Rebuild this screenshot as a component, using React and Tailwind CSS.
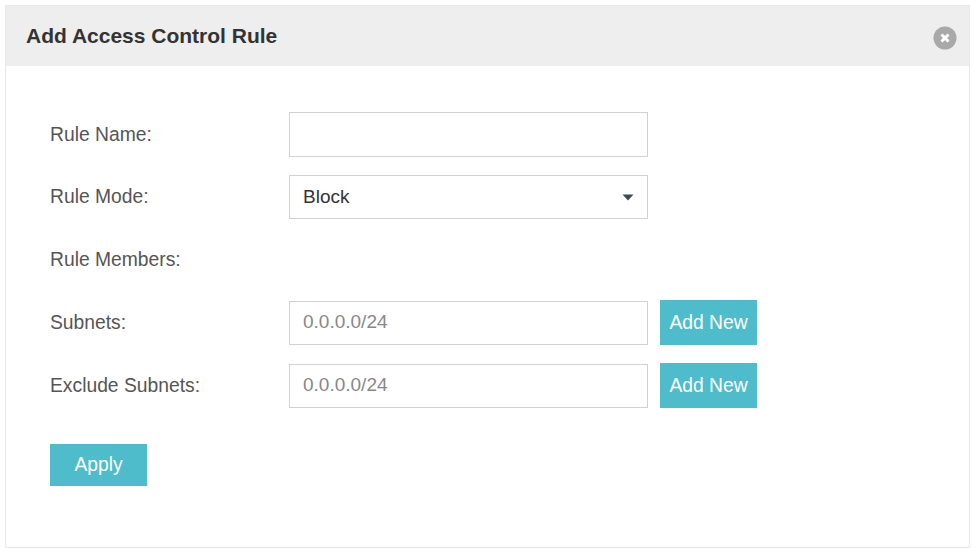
import React from 'react';

const Label = ({ children }) => (
    <label className="w-[239px] shrink-0 text-[19.3px] text-[#555] leading-[24px]">{children}</label>
);

const boxClass = "w-[359px] h-[44px] border border-[#d2d2d2] bg-white px-[13px] text-[19px] flex items-center";

const SubnetRow = ({ label, className }) => (
    <div className={"flex items-center h-[45px] " + className}>
        <Label>{label}</Label>
        <div className={boxClass + " text-[#888]"}>0.0.0.0/24</div>
        <button className="ml-[12px] w-[97px] h-[45px] bg-[#4fbccb] text-white text-[19.3px] leading-[24px]">Add New</button>
    </div>
);

export default function App() {
    return (
        <div className="w-[979px] h-[548px] bg-white pt-[5px] pl-[5px] overflow-hidden" style={{ fontFamily: '"Liberation Sans", Arial, sans-serif' }}>
            <div className="w-[965px] h-[543px] border border-[#e8e8e8] bg-white">
                <div className="h-[60px] bg-[#eeeeee] flex items-center justify-between pl-[20px] pr-[12px]">
                    <h1 className="text-[21px] font-bold text-[#333] leading-[26px]">Add Access Control Rule</h1>
                    <svg width="24" height="24" viewBox="0 0 24 24" className="mt-[4px]">
                        <circle cx="12" cy="12" r="11.5" fill="#a9a9a9" />
                        <path d="M8.5 8.5 L15.5 15.5 M15.5 8.5 L8.5 15.5" stroke="#fff" strokeWidth="3" />
                    </svg>
                </div>

                <div className="pl-[44px] pt-[46px]">
                    <div className="flex items-center">
                        <Label>Rule Name:</Label>
                        <div className={boxClass + " h-[45px]"} />
                    </div>

                    <div className="flex items-center mt-[18px]">
                        <Label>Rule Mode:</Label>
                        <div className={boxClass + " justify-between text-[#333]"}>
                            <span>Block</span>
                            <svg width="12" height="7" viewBox="0 0 12 7">
                                <path d="M0.5 0.5 H11.5 L6 6.5 Z" fill="#3d4a50" />
                            </svg>
                        </div>
                    </div>

                    <div className="flex items-center h-[19px] mt-[31px]">
                        <Label>Rule Members:</Label>
                    </div>

                    <SubnetRow label="Subnets:" className="mt-[31px]" />
                    <SubnetRow label="Exclude Subnets:" className="mt-[18px]" />

                    <button className="mt-[36px] block w-[97px] h-[42px] bg-[#4fbccb] text-white text-[19.3px] leading-[24px]">Apply</button>
                </div>
            </div>
        </div>
    );
}
